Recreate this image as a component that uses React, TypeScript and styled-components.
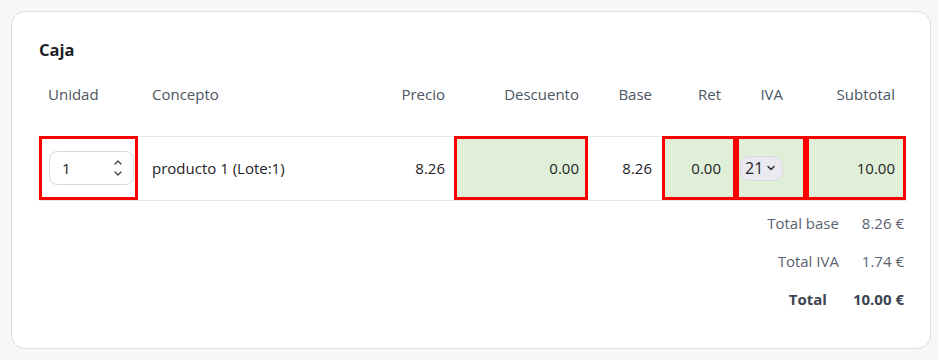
import React, { FC } from "react";
import styled, { createGlobalStyle, css } from "styled-components";

const COLS = "99px 236px 80px 134px 74px 74px 70px 100px";

type Align = "left" | "right";

interface Column {
  key: string;
  label: string;
  align: Align;
  pad: number;
}

const columns: Column[] = [
  { key: "unidad", label: "Unidad", align: "left", pad: 9 },
  { key: "concepto", label: "Concepto", align: "left", pad: 14 },
  { key: "precio", label: "Precio", align: "right", pad: 9 },
  { key: "descuento", label: "Descuento", align: "right", pad: 9 },
  { key: "base", label: "Base", align: "right", pad: 10 },
  { key: "ret", label: "Ret", align: "right", pad: 15 },
  { key: "iva", label: "IVA", align: "right", pad: 23 },
  { key: "subtotal", label: "Subtotal", align: "right", pad: 11 },
];

const totals = [
  { label: "Total base", value: "8.26 €", strong: false },
  { label: "Total IVA", value: "1.74 €", strong: false },
  { label: "Total", value: "10.00 €", strong: true },
];

export const App: FC = () => {
  return (
    <>
      <GlobalStyle />
      <Page>
        <Card>
          <Title>Caja</Title>
          <HeaderRow>
            {columns.map((col) => (
              <HeaderCell key={col.key} $align={col.align} $pad={col.pad}>
                {col.label}
              </HeaderCell>
            ))}
          </HeaderRow>
          <BodyRow>
            <Cell $align="left" $pad={0} $flagged>
              <NumberBox>
                <span>1</span>
                <Spinner width="10" height="20" viewBox="0 0 10 20">
                  <path d="M2 6 L5 3 L8 6" />
                  <path d="M2 14 L5 17 L8 14" />
                </Spinner>
              </NumberBox>
            </Cell>
            <Cell $align="left" $pad={14}>
              producto 1 (Lote:1)
            </Cell>
            <Cell $align="right" $pad={9}>
              8.26
            </Cell>
            <Cell $align="right" $pad={9} $flagged $filled>
              0.00
            </Cell>
            <Cell $align="right" $pad={10}>
              8.26
            </Cell>
            <Cell $align="right" $pad={15} $flagged $filled>
              0.00
            </Cell>
            <Cell $align="left" $pad={0} $flagged $filled>
              <SelectBox>
                <span>21</span>
                <Caret width="10" height="8" viewBox="0 0 10 8">
                  <path d="M2 2.5 L5 5.5 L8 2.5" />
                </Caret>
              </SelectBox>
            </Cell>
            <Cell $align="right" $pad={11} $flagged $filled>
              10.00
            </Cell>
          </BodyRow>
          <Totals>
            {totals.map((t) => (
              <React.Fragment key={t.label}>
                <TotalLabel $strong={t.strong}>{t.label}</TotalLabel>
                <TotalValue $strong={t.strong}>{t.value}</TotalValue>
              </React.Fragment>
            ))}
          </Totals>
        </Card>
      </Page>
    </>
  );
};

const GlobalStyle = createGlobalStyle`
  html, body {
    margin: 0;
    padding: 0;
    background: #f6f7f9;
    font-family: "Open Sans", "Noto Sans", sans-serif;
    -webkit-font-smoothing: antialiased;
  }
`;

const Page = styled.div`
  padding: 11px 7px 11px 11px;
`;

const Card = styled.div`
  box-sizing: border-box;
  width: 920px;
  background: #ffffff;
  border: 1px solid #d9dde4;
  border-radius: 14px;
  padding: 25px 24px 30px 27px;
`;

const Title = styled.h2`
  margin: 0;
  font-size: 16.5px;
  line-height: 25px;
  font-weight: 700;
  color: #1d2125;
`;

const HeaderRow = styled.div`
  display: grid;
  grid-template-columns: ${COLS};
  margin-top: 11px;
  height: 63px;
`;

const HeaderCell = styled.div<{ $align: Align; $pad: number }>`
  font-size: 15px;
  line-height: 24px;
  padding-top: 9px;
  color: #4b5563;
  text-align: ${(p) => p.$align};
  ${(p) =>
    p.$align === "left"
      ? css`padding-left: ${p.$pad}px;`
      : css`padding-right: ${p.$pad}px;`}
`;

const BodyRow = styled.div`
  display: grid;
  grid-template-columns: ${COLS};
  height: 65px;
  border-top: 1px solid #e3e6ea;
  border-bottom: 1px solid #e3e6ea;
  box-sizing: border-box;
`;

const Cell = styled.div<{
  $align: Align;
  $pad: number;
  $flagged?: boolean;
  $filled?: boolean;
}>`
  box-sizing: border-box;
  display: flex;
  align-items: center;
  justify-content: ${(p) => (p.$align === "left" ? "flex-start" : "flex-end")};
  font-size: 15px;
  color: #1f2328;
  background: ${(p) => (p.$filled ? "#dfefd8" : "transparent")};
  border: ${(p) => (p.$flagged ? "3px solid #ff0000" : "none")};
  ${(p) =>
    p.$align === "left"
      ? css`padding-left: ${p.$flagged ? Math.max(p.$pad - 3, 0) : p.$pad}px;`
      : css`padding-right: ${p.$flagged ? p.$pad - 3 : p.$pad}px;`}
  margin-top: -1px;
`;

const NumberBox = styled.div`
  box-sizing: border-box;
  margin-left: 7px;
  width: 85px;
  height: 34px;
  border: 1px solid #d6d9de;
  border-radius: 8px;
  background: #ffffff;
  display: flex;
  align-items: center;
  justify-content: space-between;
  padding: 0 10px 0 12px;
  font-size: 15px;
  color: #1f2328;
`;

const Spinner = styled.svg`
  fill: none;
  stroke: #3a3f45;
  stroke-width: 1.3;
  stroke-linecap: round;
  stroke-linejoin: round;
`;

const SelectBox = styled.div`
  box-sizing: border-box;
  margin-left: 1px;
  width: 43px;
  height: 25px;
  border: 1px solid #dadae2;
  border-radius: 9px;
  background: #e9e9ef;
  display: flex;
  align-items: center;
  gap: 3px;
  padding-left: 4px;
  font-size: 16px;
  color: #1f2328;
`;

const Caret = styled.svg`
  fill: none;
  stroke: #2f3338;
  stroke-width: 1.5;
  stroke-linecap: round;
  stroke-linejoin: round;
`;

const Totals = styled.div`
  display: grid;
  grid-template-columns: auto auto;
  justify-content: end;
  column-gap: 14px;
  grid-auto-rows: 38px;
  margin-top: 3px;
  padding-right: 2px;
`;

const TotalLabel = styled.div<{ $strong: boolean }>`
  display: flex;
  align-items: center;
  justify-content: flex-end;
  font-size: 15px;
  color: ${(p) => (p.$strong ? "#3d4451" : "#5b6370")};
  font-weight: ${(p) => (p.$strong ? 700 : 400)};
  padding-right: ${(p) => (p.$strong ? 12 : 0)}px;
`;

const TotalValue = styled.div<{ $strong: boolean }>`
  display: flex;
  align-items: center;
  justify-content: flex-end;
  font-size: 15px;
  color: ${(p) => (p.$strong ? "#3d4451" : "#5b6370")};
  font-weight: ${(p) => (p.$strong ? 700 : 400)};
`;

export default App;
